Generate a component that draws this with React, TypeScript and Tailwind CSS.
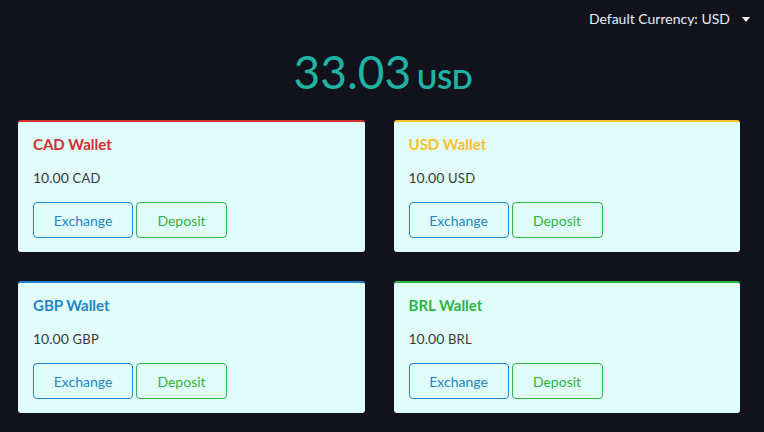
const wallets = [
  { code: "CAD", title: "text-[#d32f2f]", border: "border-t-[#d32f2f]" },
  { code: "USD", title: "text-[#fbc02d]", border: "border-t-[#fbc02d]" },
  { code: "GBP", title: "text-[#2385c8]", border: "border-t-[#2385c8]" },
  { code: "BRL", title: "text-[#2fb344]", border: "border-t-[#2fb344]" },
];

function WalletCard({ code, title, border }: { code: string; title: string; border: string }) {
  return (
    <div className={`bg-[#e0fdfa] rounded-[3px] border-t-2 ${border} px-[15px] pt-[12px] pb-[15px] h-[132px]`}>
      <h3 className={`text-[15px] font-bold leading-5 ${title}`}>{code} Wallet</h3>
      <div className="mt-[14px] text-[14px] text-[#3a3a3a] leading-5">
        10.00 <span className="text-[13px] tracking-wide">{code}</span>
      </div>
      <div className="mt-[14px] flex gap-[3px]">
        <button className="w-[100px] h-[36px] rounded-[4px] border border-[#2385c8] text-[#2385c8] text-[14px]">
          Exchange
        </button>
        <button className="w-[91px] h-[36px] rounded-[4px] border border-[#2fb344] text-[#2fb344] text-[14px]">
          Deposit
        </button>
      </div>
    </div>
  );
}

export default function App() {
  return (
    <div
      className="min-h-screen h-[432px] bg-[#12121c] text-white overflow-hidden"
      style={{ fontFamily: "Lato, 'Noto Sans', sans-serif" }}
    >
      <div className="flex justify-end items-center pt-[9px] pr-[14px] h-[28px]">
        <span className="text-[14px] text-[#e8eef5]">Default Currency: USD</span>
        <svg className="ml-[12px] mt-[1px]" width="8" height="5" viewBox="0 0 8 5">
          <path d="M0 0h8L4 5z" fill="#fff" />
        </svg>
      </div>

      <div className="flex justify-center items-baseline mt-[12px] text-[#1fb3a5] pl-[2px]">
        <span className="text-[46px] leading-[64px]">33.03</span>
        <span className="ml-[6px] text-[27px] font-bold">USD</span>
      </div>

      <div className="grid grid-cols-2 gap-x-[29px] gap-y-[29px] pl-[18px] pr-[24px] mt-[16px]">
        {wallets.map((w) => (
          <WalletCard key={w.code} {...w} />
        ))}
      </div>
    </div>
  );
}
